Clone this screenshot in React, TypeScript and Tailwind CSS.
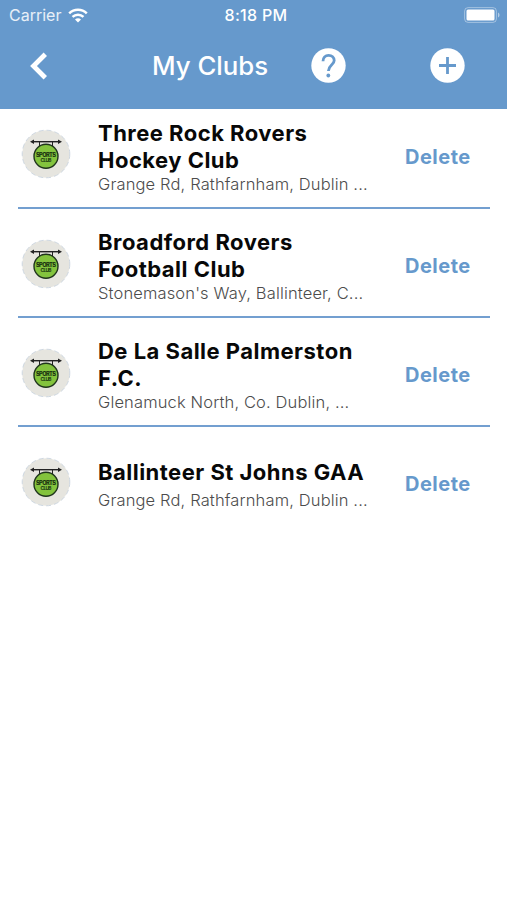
interface Club {
  id: number
  name: string[]
  address: string
}

const clubs: Club[] = [
  { id: 1, name: ['Three Rock Rovers', 'Hockey Club'], address: 'Grange Rd, Rathfarnham, Dublin ...' },
  { id: 2, name: ['Broadford Rovers', 'Football Club'], address: "Stonemason's Way, Ballinteer, C..." },
  { id: 3, name: ['De La Salle Palmerston', 'F.C.'], address: 'Glenamuck North, Co. Dublin, ...' },
  { id: 4, name: ['Ballinteer St Johns GAA'], address: 'Grange Rd, Rathfarnham, Dublin ...' },
]

function BackIcon() {
  return (
    <svg width="20" height="30" viewBox="0 0 20 30" fill="none" stroke="white" strokeWidth="4.8">
      <path d="M16.3 3.2L4.5 15l11.8 11.8" />
    </svg>
  )
}

function WifiIcon() {
  return (
    <svg width="20" height="15" viewBox="0 0 20 15" fill="none" stroke="white" strokeWidth="2.5">
      <path d="M1.2 5.3C6.1 .6 13.9 .6 18.8 5.3" />
      <path d="M4.5 8.8c3.1-2.9 7.9-2.9 11 0" />
      <path d="M7 11.4c1.7-1.6 4.3-1.6 6 0L10 14.4z" fill="white" stroke="none" />
    </svg>
  )
}

function BatteryIcon() {
  return (
    <svg width="36" height="16" viewBox="0 0 36 16">
      <rect x=".6" y=".6" width="31.8" height="14.8" rx="3.5" fill="none" stroke="white" strokeOpacity=".4" />
      <rect x="2.5" y="2.5" width="28" height="11" rx="1.5" fill="white" />
      <path d="M34 5.5c2 .7 2 4.3 0 5z" fill="white" fillOpacity=".5" />
    </svg>
  )
}

function HelpIcon() {
  return (
    <svg width="35" height="35" viewBox="0 0 35 35" fill="none">
      <circle cx="17.5" cy="17.5" r="17.2" fill="white" />
      <path
        d="M12 13.2c0-3.6 2.3-5.9 5.6-5.9s5.6 2.1 5.6 5.2c0 4.4-5.8 4.9-5.8 10.4"
        stroke="#6699cc"
        strokeWidth="2.8"
      />
      <circle cx="17.3" cy="27.5" r="1.9" fill="#6699cc" />
    </svg>
  )
}

function AddIcon() {
  return (
    <svg width="35" height="35" viewBox="0 0 35 35">
      <circle cx="17.5" cy="17.5" r="17.2" fill="white" />
      <path d="M17.5 9v17M9 17.5h17" stroke="#6699cc" strokeWidth="2.8" />
    </svg>
  )
}

function ClubLogo() {
  return (
    <svg className="mt-[2px] shrink-0" width="50" height="50" viewBox="0 0 50 50">
      <circle cx="25" cy="25" r="23.8" fill="#e6e5df" stroke="#c5d0dd" strokeWidth=".8" strokeDasharray="5 3" />
      <path d="M11 12.7h28" stroke="#222" strokeWidth="1.4" />
      <path d="M9 12.7l4-2.2v4.4zM41 12.7l-4-2.2v4.4z" fill="#222" />
      <path d="M18.5 12.7v5M31.5 12.7v5" stroke="#222" strokeWidth="1" />
      <circle cx="25" cy="27.3" r="12" fill="#83c33d" stroke="#20351d" strokeWidth="1.4" />
      <text x="25" y="28" textAnchor="middle" fontSize="5.7" fontWeight="800" fill="#18310f" textLength="20">
        SPORTS
      </text>
      <text x="25" y="33.2" textAnchor="middle" fontSize="4.8" fontWeight="700" fill="#18310f" textLength="11">
        CLUB
      </text>
    </svg>
  )
}

function ClubRow({ club, last }: { club: Club; last: boolean }) {
  return (
    <li
      className={`flex h-[109.2px] items-center border-b-2 pl-[3px] ${
        last ? 'border-transparent' : 'border-[#739fd0]'
      }`}
    >
      <ClubLogo />
      <div className="ml-[27px] w-[307px] shrink-0 pt-[7px]">
        <h2 className={`text-[22px] leading-[27px] font-[650] tracking-[0.48px] text-[#080808] ${last ? 'mb-1' : ''}`}>
          {club.name.map((line) => (
            <span key={line} className="block whitespace-nowrap">{line}</span>
          ))}
        </h2>
        <p className="text-[16.5px] leading-5 font-light tracking-[0.14px] whitespace-nowrap text-[#4c4c4c]">
          {club.address}
        </p>
      </div>
      <button className="pt-[7px] text-[20px] leading-6 font-bold tracking-[0.5px] text-[#6699cc]">Delete</button>
    </li>
  )
}

export default function App() {
  return (
    <div className="min-h-screen bg-white font-[Inter,sans-serif]">
      <header className="relative z-10 h-[108.5px] bg-[#6699cc] text-white">
        {/* Status bar */}
        <div className="grid h-[30px] grid-cols-3 items-center pr-[7px] pl-[9px] text-[16px]">
          <div className="flex items-center gap-[7px]">
            <span className="text-white/85">Carrier</span>
            <WifiIcon />
          </div>
          <span className="pl-[3px] text-center font-medium tracking-[0.3px]">8:18 PM</span>
          <div className="flex justify-end">
            <BatteryIcon />
          </div>
        </div>

        {/* Navigation */}
        <div className="flex h-[71px] items-center">
          <button className="ml-[29px] w-[20px]">
            <BackIcon />
          </button>
          <h1 className="ml-[103px] w-[159px] pt-0.5 text-[25.8px] font-medium whitespace-nowrap">My Clubs</h1>
          <button>
            <HelpIcon />
          </button>
          <button className="ml-[84px]">
            <AddIcon />
          </button>
        </div>
      </header>

      <ul className="-mt-[8.7px] pr-[17px] pl-[18px]">
        {clubs.map((club, i) => (
          <ClubRow key={club.id} club={club} last={i === clubs.length - 1} />
        ))}
      </ul>
    </div>
  )
}
